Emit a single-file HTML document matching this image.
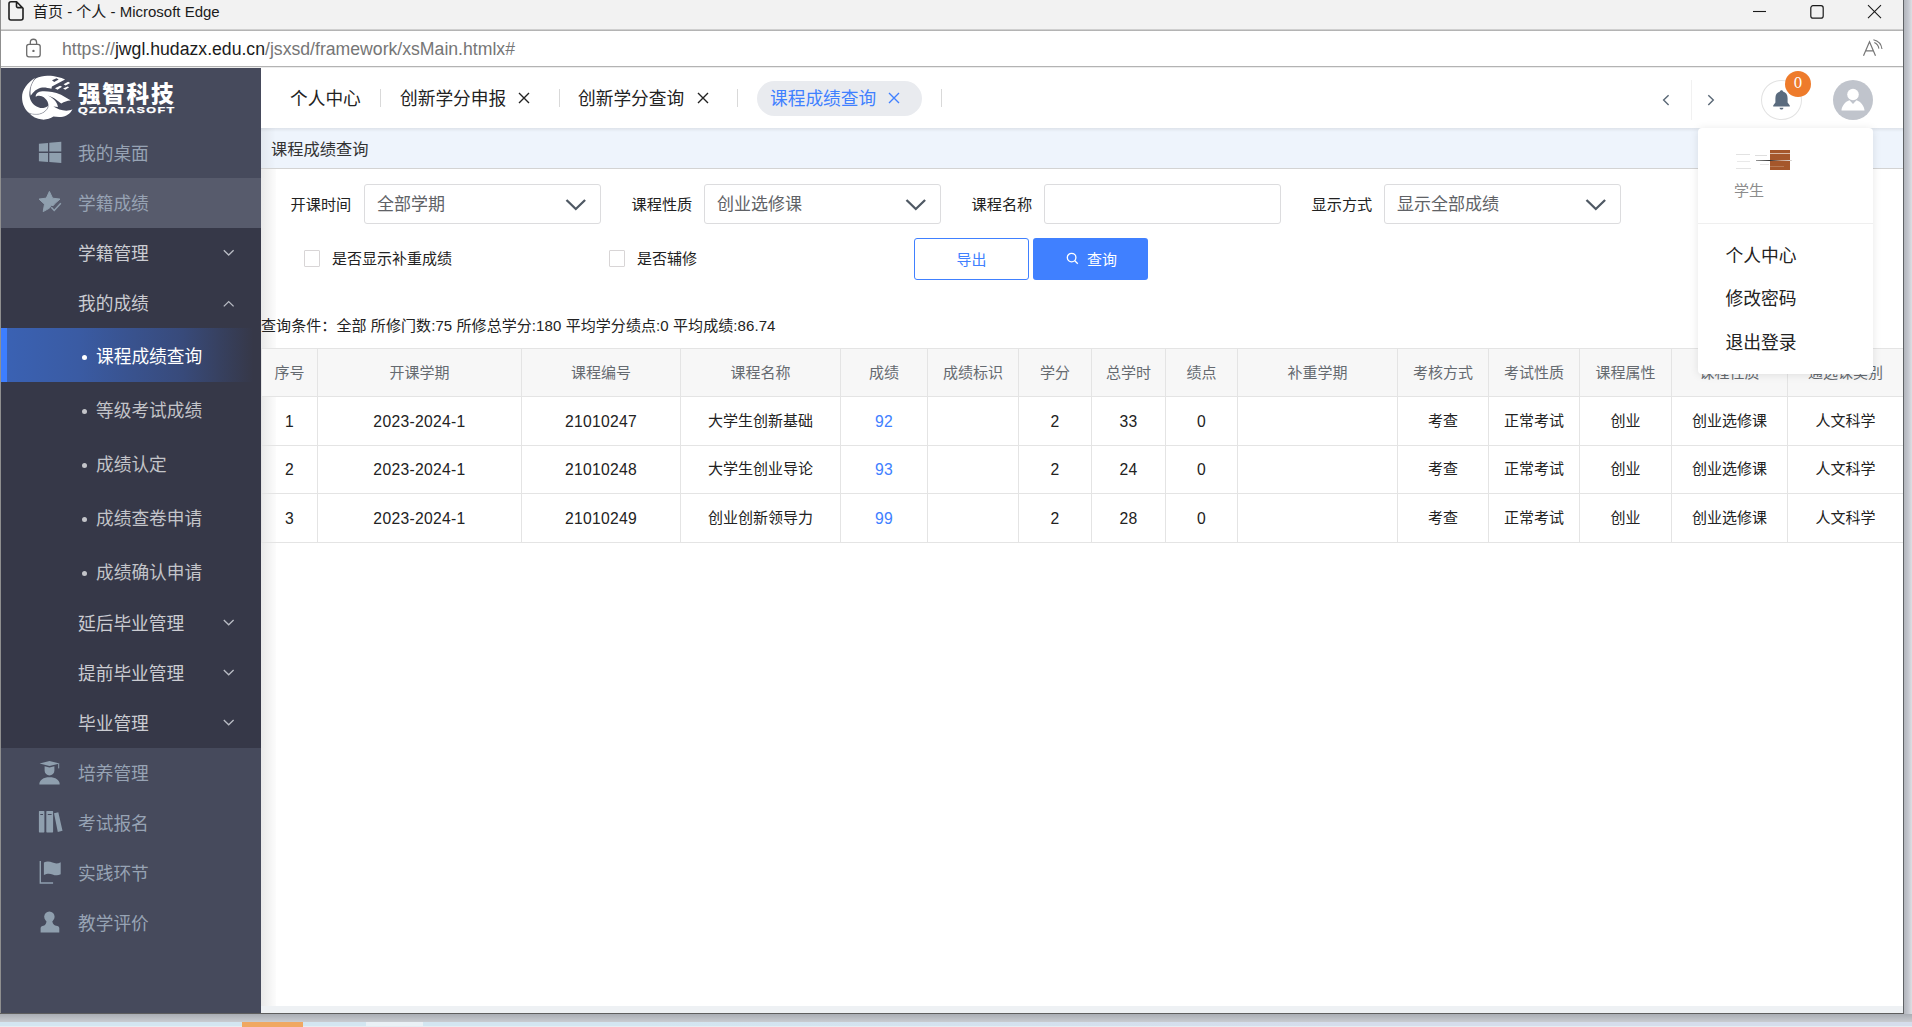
<!DOCTYPE html>
<html lang="zh-CN">
<head>
<meta charset="utf-8">
<title>首页 - 个人</title>
<style>
*{box-sizing:border-box;margin:0;padding:0}
html,body{width:1912px;height:1027px;overflow:hidden;background:#c4c7cd}
body{font-family:"Liberation Sans","Noto Sans CJK SC",sans-serif;color:#222;position:relative}
.abs{position:absolute}
#win{position:absolute;left:0;top:0;width:1903px;height:1013px;background:#fff;overflow:hidden}
/* title bar */
#title{position:absolute;left:0;top:0;width:1903px;height:31px;background:linear-gradient(180deg,#f2f2f2 0,#f2f2f2 28.5px,#cfcfcf 29.5px,#a6a6a6 31px)}
#title .txt{position:absolute;left:33px;top:0;height:24px;line-height:24px;font-size:15px;color:#1b1b1b;white-space:nowrap}
#urlbar{position:absolute;left:0;top:31px;width:1903px;height:37px;background:#fff}
#urlbar .url{position:absolute;left:62px;top:5px;height:26px;line-height:26px;font-size:17.65px;color:#767676;white-space:nowrap}
#urlbar .url b{font-weight:normal;color:#1b1b1b}
#urlline{position:absolute;left:0;top:66px;width:1903px;height:2px;background:linear-gradient(180deg,#b3b3b3 0,#b3b3b3 1px,#ececec 1px)}
/* sidebar */
#side{position:absolute;left:1px;top:68px;width:260px;height:945px;background:#464a5c}
.mi{position:absolute;left:0;width:260px;height:50px;line-height:50px;font-size:17.7px;color:#97a3b4;white-space:nowrap}
.mi span{position:absolute;left:77px;top:.8px}
.sub{color:#cbccd2}
.leaf{height:54px;line-height:54px;color:#c3c4c9}
.leaf span{left:95px;top:1.800px}
.leaf i{position:absolute;left:81px;top:26.700px;width:5px;height:5px;border-radius:50%;background:#c3c4c9}
/* main */
#main{position:absolute;left:261px;top:68px;width:1642px;height:945px;background:#fff}

/* tabs */
#tabs{position:absolute;left:0;top:0;width:1642px;height:60px;background:#fff}
.tab{position:absolute;top:13.8px;height:35px;line-height:35px;font-size:17.7px;color:#222;white-space:nowrap}
.sep{position:absolute;top:21px;width:1px;height:18px;background:#d9d9d9}
.tx{position:absolute;top:24px;width:12px;height:12px}
#hd{position:absolute;left:0;top:60px;width:1642px;height:41px;background:#eef4fc;border-bottom:1px solid #d3d3d3}
#hd span{position:absolute;left:10px;top:.8px;line-height:40px;font-size:16.25px;color:#333;white-space:nowrap}
.lb{position:absolute;top:126px;height:22px;line-height:22px;font-size:15.200px;margin-left:.5px;color:#222;white-space:nowrap}
.sel{position:absolute;top:116px;width:237px;height:40px;border:1px solid #dcdcde;border-radius:3px;background:#fff}
.sel span{position:absolute;left:12px;top:1px;line-height:38px;font-size:17px;color:#606266;white-space:nowrap}
.sel svg{position:absolute;left:200px;top:13px}
.cb{position:absolute;top:182px;width:16px;height:16.500px;border:1px solid #d8d5d6;border-radius:1px;background:#fff}
.cl{position:absolute;top:179.8px;height:22px;line-height:22px;font-size:15px;color:#222;white-space:nowrap}
.btn{position:absolute;top:170px;width:115px;height:42px;border-radius:3px;font-size:15px;line-height:43.500px;text-align:center}
#info{position:absolute;left:0;top:246px;height:24px;line-height:24px;font-size:15px;letter-spacing:.08px;color:#222;white-space:nowrap}
/* table */
#tb{position:absolute;left:0;top:280px;width:1642px;border-collapse:collapse;table-layout:fixed;font-size:15px}
#tb td,#tb th{border:1px solid #e4e4e4;text-align:center;font-weight:normal;white-space:nowrap;overflow:hidden;padding:0 0 2.600px 0}
#tb th{height:48px;background:#f7f7f7;color:#656a70}
#tb td{height:48.5px;color:#222}
#tb td.n{font-size:15.7px;letter-spacing:.3px;padding:1.800px 0 0 0}
#tb td.g{color:#4080ff}
/* popup */
#pop{position:absolute;left:1437px;top:60px;width:175px;height:246px;background:#fff;border-radius:4px;box-shadow:0 1px 8px rgba(0,0,0,.10)}
#pop .it{position:absolute;left:27.500px;font-size:17.800px;line-height:26px;color:#222;white-space:nowrap}
</style>
</head>
<body>
<div id="win">
  <div id="title"><svg class="abs" style="left:7px;top:0" width="18" height="22" viewBox="7 0 18 22"><path d="M11 1.800h5.600l6.400 6.400v9.800a2 2 0 0 1-2 2h-10a2 2 0 0 1-2-2v-14.200a2 2 0 0 1 2-2zM16.500 2v4.200a1.400 1.400 0 0 0 1.400 1.400h4.800" fill="none" stroke="#1f1f1f" stroke-width="1.600" stroke-linejoin="round"/></svg>
<svg class="abs" style="left:1750px;top:3px" width="135" height="18" viewBox="1750 3 135 18"><path d="M1753 11.500h13" stroke="#1a1a1a" stroke-width="1.100"/><rect x="1810.800" y="5.700" width="12.400" height="12.400" rx="2.200" fill="none" stroke="#1a1a1a" stroke-width="1.200"/><path d="M1868 5.200l13 13M1881 5.200l-13 13" stroke="#1a1a1a" stroke-width="1.100"/></svg><div class="txt">首页 - 个人 - Microsoft Edge</div></div>
  <div id="urlbar"><svg class="abs" style="left:24px;top:6px" width="20" height="22" viewBox="24 37 20 22"><rect x="26.700" y="44.400" width="13.500" height="12.400" rx="2.200" fill="none" stroke="#6b6b6b" stroke-width="1.300"/><path d="M30.300 44.400v-2a3.150 3.150 0 0 1 6.300 0v2" fill="none" stroke="#6b6b6b" stroke-width="1.300"/><circle cx="33.450" cy="50.900" r="1.200" fill="#6b6b6b"/></svg>
<svg class="abs" style="left:1861px;top:6px" width="24" height="22" viewBox="1861 37 24 22"><path d="M1863.500 55.800l6-14 6 14M1865.700 50.800h7.600" fill="none" stroke="#767676" stroke-width="1.200"/><path d="M1874.300 42.600a8 8 0 0 1 4.600 6M1873.400 39.700a11 11 0 0 1 8.600 9.300" fill="none" stroke="#767676" stroke-width="1.100"/></svg><div class="url">https://<b>jwgl.hudazx.edu.cn</b>/jsxsd/framework/xsMain.htmlx#</div></div>
  <div id="urlline"></div>
  <div id="side">
    <div class="abs" style="left:0;top:160px;width:260px;height:520px;background:#363848"></div>
    <div class="abs" style="left:0;top:110px;width:260px;height:50px;background:#575b6c"></div>
<svg class="abs" style="left:17px;top:4px" width="62" height="54" viewBox="18 72 62 54"><g transform="translate(18,72) scale(0.050633)">
<path d="M340,115 C180,220 80,350 80,500 C80,640 140,750 220,810 C300,860 420,850 500,800 C560,760 590,720 595,665 C560,700 500,715 440,710 C340,690 250,610 232,500 C215,380 260,230 340,115Z" fill="#fff"/>
<path d="M220,810 C300,845 420,850 500,800 C570,755 600,700 600,640 C590,560 520,500 470,480 C420,455 370,470 350,490 C345,440 380,390 450,383 C560,375 700,385 850,450 L1045,565 C980,560 920,590 855,620 C800,590 720,500 580,465 C680,500 770,580 790,690 C760,690 730,680 700,680 C800,740 950,800 1075,735 C1040,820 950,880 850,887 C790,890 740,885 700,880 C640,920 560,945 480,940 C370,930 280,880 220,810Z" fill="#fff"/>
<path d="M250,470 C225,330 270,190 350,130 C430,85 520,72 600,75 C720,78 850,110 930,150 L670,285 L660,330 C600,315 540,300 480,305 C400,315 320,370 280,430Z" fill="#fff"/>
<path d="M345,118 C260,220 215,360 240,490" fill="none" stroke="#464a5c" stroke-width="9"/>
<path d="M225,812 C300,845 420,848 500,800 C565,758 595,715 597,665" fill="none" stroke="#464a5c" stroke-width="8"/>
<path d="M672,165L762,122L802,150L715,197Z" fill="#464a5c"/>
<path d="M900,240L990,195L1030,215L940,265ZM730,320L830,270L870,290L780,350ZM890,325L980,285L1010,300L935,350Z" fill="#fff"/>
</g></svg>
<div class="abs" style="left:77px;top:11.700px;font-size:22.600px;line-height:30px;font-weight:900;color:#fff;white-space:nowrap;letter-spacing:1.7px" id="lg1">强智科技</div>
<div class="abs" style="left:76.600px;top:36.300px;font-size:9.200px;line-height:12px;font-weight:bold;color:#fff;white-space:nowrap;letter-spacing:1px;transform-origin:0 0;transform:scaleX(1.365);-webkit-text-stroke:.25px #fff" id="lg2">QZDATASOFT</div>
<svg class="abs" style="left:0;top:0" width="260" height="945" viewBox="1 68 260 945">
<!-- windows -->
<path d="M38.900 143.700L48 142.900V151.600H38.900zM49.300 142.800L61.300 141.800V151.600H49.300zM38.900 153H48V161.900L38.900 161.200zM49.300 153H61.300V163.100L49.300 162z" fill="#8f9fae"/>
<!-- star + check -->
<path d="M49.400 191.400L52.600 198.200L60 199.100L54.900 203.500L53.300 205.600L51.100 205.300L49.500 208.100L43.200 211.600L44.500 204.200L39 199.100L46.300 198.100z" fill="#8f9fae" stroke="#8f9fae" stroke-width="1" stroke-linejoin="round"/>
<path d="M51.300 207.300L54.200 210.400L60.800 203.300" fill="none" stroke="#8f9fae" stroke-width="1.500"/>
<!-- graduate -->
<path d="M49.500 760.900L59.600 763.400L49.500 766L39.600 763.400z" fill="#8f9fae"/>
<path d="M58.700 763.600v4.800" stroke="#8f9fae" stroke-width="1"/>
<path d="M44.600 766.300L49.500 767.600L54.400 766.300V770.500A4.900 4.900 0 0 1 44.600 770.500z" fill="#8f9fae"/>
<path d="M39.300 784.400C39.300 780 43.500 777.300 49.500 777.300S59.700 780 59.700 784.400z" fill="#8f9fae"/>
<!-- books -->
<path d="M38.900 811.600Q38.900 811 39.500 811H43.800Q44.400 811 44.400 811.600V831.800Q44.400 832.400 43.800 832.400H39.500Q38.900 832.400 38.900 831.800zM46.300 811.600Q46.300 811 46.900 811H52.500Q53.100 811 53.100 811.600V831.800Q53.100 832.400 52.500 832.400H46.900Q46.300 832.400 46.300 831.800zM54 813.300L58.300 812.200L62.500 830.800L57.800 832z" fill="#8f9fae"/>
<path d="M40.300 814.500h2.700M47.800 814.500h3.800" stroke="#464a5c" stroke-width="1"/>
<!-- flag -->
<path d="M40.300 861V883H53.100" fill="none" stroke="#8f9fae" stroke-width="1.400"/>
<path d="M43.900 862.600C47 860.800 50 861.600 52.500 862.600S57.800 863.800 60.700 862.200V874.300C57.800 876 55 875.400 52.500 874.400S47 873.300 43.900 875z" fill="#8f9fae"/>
<!-- user -->
<circle cx="49.400" cy="916.800" r="5.200" fill="#8f9fae"/>
<path d="M46.500 920H52.300C52.300 924 54 925.600 57.500 926.100Q59.300 926.400 59.300 928V932.400H40.600V928Q40.600 926.400 42.400 926.100C45.200 925.600 46.500 924 46.500 920z" fill="#8f9fae"/>
<!-- chevrons -->
<g fill="none" stroke="#b9bcc4" stroke-width="1.300">
<path d="M223.800 250.200L228.700 255L233.600 250.200"/>
<path d="M223.800 306.400L228.700 301.600L233.600 306.400"/>
<path d="M223.800 620L228.700 624.800L233.600 620"/>
<path d="M223.800 670L228.700 674.800L233.600 670"/>
<path d="M223.800 720L228.700 724.800L233.600 720"/>
</g>
</svg>
    <div class="mi" style="top:60px"><span>我的桌面</span></div>
    <div class="mi" style="top:110px"><span>学籍成绩</span></div>
    <div class="mi sub" style="top:160px"><span>学籍管理</span></div>
    <div class="mi sub" style="top:210px"><span>我的成绩</span></div>
    <div class="abs" style="left:0;top:260px;width:260px;height:54px;background:linear-gradient(90deg,#3a62b4 0%,#3a5ba3 30%,#384a7a 70%,#363848 97%)"></div>
    <div class="abs" style="left:0;top:260px;width:6px;height:54px;background:#3d7eff"></div>
    <div class="mi leaf" style="top:260px;color:#fff"><i style="background:#fff"></i><span>课程成绩查询</span></div>
    <div class="mi leaf" style="top:314px"><i></i><span>等级考试成绩</span></div>
    <div class="mi leaf" style="top:368px"><i></i><span>成绩认定</span></div>
    <div class="mi leaf" style="top:422px"><i></i><span>成绩查卷申请</span></div>
    <div class="mi leaf" style="top:476px"><i></i><span>成绩确认申请</span></div>
    <div class="mi sub" style="top:530px"><span>延后毕业管理</span></div>
    <div class="mi sub" style="top:580px"><span>提前毕业管理</span></div>
    <div class="mi sub" style="top:630px"><span>毕业管理</span></div>
    <div class="mi" style="top:680px"><span>培养管理</span></div>
    <div class="mi" style="top:730px"><span>考试报名</span></div>
    <div class="mi" style="top:780px"><span>实践环节</span></div>
    <div class="mi" style="top:830px"><span>教学评价</span></div>
  </div>
  <div id="main">
    <div id="tabs">
      <div class="tab" style="left:29px">个人中心</div>
      <div class="sep" style="left:119px"></div>
      <div class="tab" style="left:139px">创新学分申报</div>
      <svg class="tx" style="left:257px" viewBox="0 0 12 12"><path d="M1 1L11 11M11 1L1 11" stroke="#222" stroke-width="1.4" fill="none"/></svg>
      <div class="sep" style="left:298px"></div>
      <div class="tab" style="left:317px">创新学分查询</div>
      <svg class="tx" style="left:435.5px" viewBox="0 0 12 12"><path d="M1 1L11 11M11 1L1 11" stroke="#222" stroke-width="1.4" fill="none"/></svg>
      <div class="sep" style="left:476px"></div>
      <div class="abs" style="left:496px;top:13px;width:165px;height:35px;border-radius:18px;background:#e9ebef"></div>
      <div class="tab" style="left:509px;color:#4080ff">课程成绩查询</div>
      <svg class="tx" style="left:627px" viewBox="0 0 12 12"><path d="M1 1L11 11M11 1L1 11" stroke="#4080ff" stroke-width="1.4" fill="none"/></svg>
      <div class="sep" style="left:680px"></div>
      <svg class="abs" style="left:1399px;top:25px" width="10" height="14" viewBox="0 0 10 14"><path d="M8.600 2.200L3.600 7.100L8.600 12" stroke="#5a6876" stroke-width="1.400" fill="none"/></svg>
      <svg class="abs" style="left:1445px;top:25px" width="10" height="14" viewBox="0 0 10 14"><path d="M2.300 2.200L7.300 7.100L2.300 12" stroke="#5a6876" stroke-width="1.400" fill="none"/></svg><div class="abs" style="left:1429.500px;top:12px;width:1px;height:40px;background:#f1f1f1"></div>
      <div class="abs" style="left:1500px;top:12px;width:40.500px;height:40px;border-radius:50%;border:1.200px solid #e2e2e2"></div>
      <svg class="abs" style="left:1511px;top:21px" width="19" height="22" viewBox="0 0 19 22"><path d="M9.5 1.2c.9 0 1.5.6 1.5 1.4 3 .8 4.6 3.3 4.6 6.6v4.3l2.2 3v.9H1.200v-.9l2.2-3V9.200c0-3.300 1.600-5.800 4.600-6.600 0-.8.600-1.400 1.500-1.400zM7.600 18.700h3.800c0 1.100-.8 1.900-1.900 1.900s-1.900-.8-1.900-1.900z" fill="#5a6b7e"/></svg>
      <div class="abs" style="left:1524px;top:3px;width:26px;height:26px;border-radius:50%;background:#ee7b2b;color:#fff;font-family:'DejaVu Serif',serif;font-size:14px;line-height:24px;text-align:center">0</div>
      <div class="abs" style="left:1572px;top:12px;width:40px;height:40px;border-radius:50%;background:#c0c4cc;overflow:hidden">
        <svg width="40" height="40" viewBox="0 0 40 40"><circle cx="20" cy="14.500" r="5.800" fill="#fff"/><path d="M8.500 30.500c0-3.500 3.500-9 8-10.200l3.500 3.700 3.500-3.700c4.500 1.200 8 6.700 8 10.200z" fill="#fff"/></svg>
      </div>
    </div>
    <div id="hd"><span>课程成绩查询</span></div>
    <div class="abs" style="left:0;top:101px;width:15px;height:844px;background:linear-gradient(90deg,rgba(0,0,0,.085),rgba(0,0,0,.012))"></div>
    <div class="abs" style="left:0;top:60px;width:15px;height:40px;background:linear-gradient(90deg,rgba(0,0,0,.05),rgba(0,0,0,0))"></div>
    <div class="abs" style="left:0;top:60px;width:1642px;height:4px;background:linear-gradient(180deg,rgba(0,0,0,.07),rgba(0,0,0,0))"></div>

    <div class="lb" style="left:29px">开课时间</div>
    <div class="sel" style="left:103px"><span>全部学期</span><svg width="22" height="14" viewBox="0 0 22 14"><path d="M1.500 2L10.800 11L20.100 2" stroke="#4f5964" stroke-width="2.300" fill="none"/></svg></div>
    <div class="lb" style="left:370px">课程性质</div>
    <div class="sel" style="left:443px"><span>创业选修课</span><svg width="22" height="14" viewBox="0 0 22 14"><path d="M1.500 2L10.800 11L20.100 2" stroke="#4f5964" stroke-width="2.300" fill="none"/></svg></div>
    <div class="lb" style="left:710px">课程名称</div>
    <div class="sel" style="left:783px"></div>
    <div class="lb" style="left:1050px">显示方式</div>
    <div class="sel" style="left:1123px"><span>显示全部成绩</span><svg width="22" height="14" viewBox="0 0 22 14"><path d="M1.500 2L10.800 11L20.100 2" stroke="#4f5964" stroke-width="2.300" fill="none"/></svg></div>

    <div class="cb" style="left:43px"></div>
    <div class="cl" style="left:71px">是否显示补重成绩</div>
    <div class="cb" style="left:348px"></div>
    <div class="cl" style="left:376px">是否辅修</div>
    <div class="btn" style="left:653px;border:1px solid #4080ff;color:#4080ff;background:#fff;line-height:41.500px">导出</div>
    <div class="btn" style="left:772px;background:#4080ff;color:#fff"><svg style="position:absolute;left:33px;top:14px" width="13" height="13" viewBox="0 0 13 13"><circle cx="5.600" cy="5.600" r="4.300" stroke="#fff" stroke-width="1.300" fill="none"/><path d="M8.800 8.800L11.800 11.800" stroke="#fff" stroke-width="1.300"/></svg><span style="position:absolute;left:54px;top:0">查询</span></div>

    <div id="info">查询条件：全部 所修门数:75 所修总学分:180 平均学分绩点:0 平均成绩:86.74</div>

    <table id="tb">
      <colgroup><col style="width:56px"><col style="width:204px"><col style="width:159px"><col style="width:160px"><col style="width:87px"><col style="width:91px"><col style="width:73px"><col style="width:74px"><col style="width:72px"><col style="width:160px"><col style="width:91px"><col style="width:91px"><col style="width:92px"><col style="width:116px"><col style="width:116px"></colgroup>
      <tr><th>序号</th><th>开课学期</th><th>课程编号</th><th>课程名称</th><th>成绩</th><th>成绩标识</th><th>学分</th><th>总学时</th><th>绩点</th><th>补重学期</th><th>考核方式</th><th>考试性质</th><th>课程属性</th><th>课程性质</th><th>通选课类别</th></tr>
      <tr><td class="n">1</td><td class="n">2023-2024-1</td><td class="n">21010247</td><td>大学生创新基础</td><td class="g n">92</td><td></td><td class="n">2</td><td class="n">33</td><td class="n">0</td><td></td><td>考查</td><td>正常考试</td><td>创业</td><td>创业选修课</td><td>人文科学</td></tr>
      <tr><td class="n">2</td><td class="n">2023-2024-1</td><td class="n">21010248</td><td>大学生创业导论</td><td class="g n">93</td><td></td><td class="n">2</td><td class="n">24</td><td class="n">0</td><td></td><td>考查</td><td>正常考试</td><td>创业</td><td>创业选修课</td><td>人文科学</td></tr>
      <tr><td class="n">3</td><td class="n">2023-2024-1</td><td class="n">21010249</td><td>创业创新领导力</td><td class="g n">99</td><td></td><td class="n">2</td><td class="n">28</td><td class="n">0</td><td></td><td>考查</td><td>正常考试</td><td>创业</td><td>创业选修课</td><td>人文科学</td></tr>
    </table>

    <div class="abs" style="left:0;top:938px;width:1642px;height:7px;background:#eef1f4"></div>

    <div id="pop">
      <div class="abs" style="left:38px;top:26px;width:14px;height:1px;background:#e2e2e2"></div>
      <div class="abs" style="left:39px;top:33px;width:13px;height:1px;background:#e9e9e9"></div>
      <div class="abs" style="left:38px;top:40px;width:15px;height:1px;background:#e4e4e4"></div>
      <div class="abs" style="left:57px;top:27px;width:12px;height:1px;background:#dedede"></div>
      <div class="abs" style="left:62px;top:36px;width:9px;height:1px;background:#e6e6e6"></div>
      <div class="abs" style="left:72px;top:22px;width:20px;height:20px;background:#a5572b"></div>
      <div class="abs" style="left:72px;top:25px;width:20px;height:1px;background:#d9b9a5"></div>
      <div class="abs" style="left:58px;top:32px;width:36px;height:1px;background:linear-gradient(90deg,#999,#333 40%,#c9a089 70%,#ddd)"></div>
      <div class="abs" style="left:72px;top:38px;width:14px;height:1px;background:#b87a55"></div>
      <div class="abs" style="left:36px;top:51.500px;font-size:15px;line-height:22px;color:#8c8c8c">学生</div>
      <div class="abs" style="left:0;top:95px;width:175px;height:1px;background:#efefef"></div>
      <div class="it" style="top:115px">个人中心</div>
      <div class="it" style="top:158px">修改密码</div>
      <div class="it" style="top:202px">退出登录</div>
    </div>
  </div>
</div>
<div class="abs" style="left:0;top:0;width:1px;height:1013px;background:#8f8f8f"></div>
<div class="abs" style="left:1903px;top:0;width:1px;height:1014px;background:#5f6266"></div>
<div class="abs" style="left:0;top:1013px;width:1904px;height:1px;background:#5e5e5e"></div>
<div class="abs" style="left:1904px;top:0;width:8px;height:1027px;background:linear-gradient(90deg,#b2b5bb,#c3c6ce 50%,#dcdfe3)"></div>
<div class="abs" style="left:0;top:1014px;width:1912px;height:8px;background:linear-gradient(180deg,#a9adb4,#c9ccd1)"></div>
<div class="abs" style="left:0;top:1022px;width:1912px;height:5px;background:linear-gradient(180deg,#d3e6f1 0,#d3e6f1 3.700px,#e6edf2 4.200px)"></div>
<div class="abs" style="left:242px;top:1022px;width:61px;height:5px;background:#f0a862"></div>
<div class="abs" style="left:366px;top:1022px;width:57px;height:4px;background:#eaf1f6"></div>
<div class="abs" style="left:640px;top:1022px;width:1272px;height:4px;background:linear-gradient(90deg,#d3e6f1 0,#d5ddec 700px)"></div>
</body>
</html>
